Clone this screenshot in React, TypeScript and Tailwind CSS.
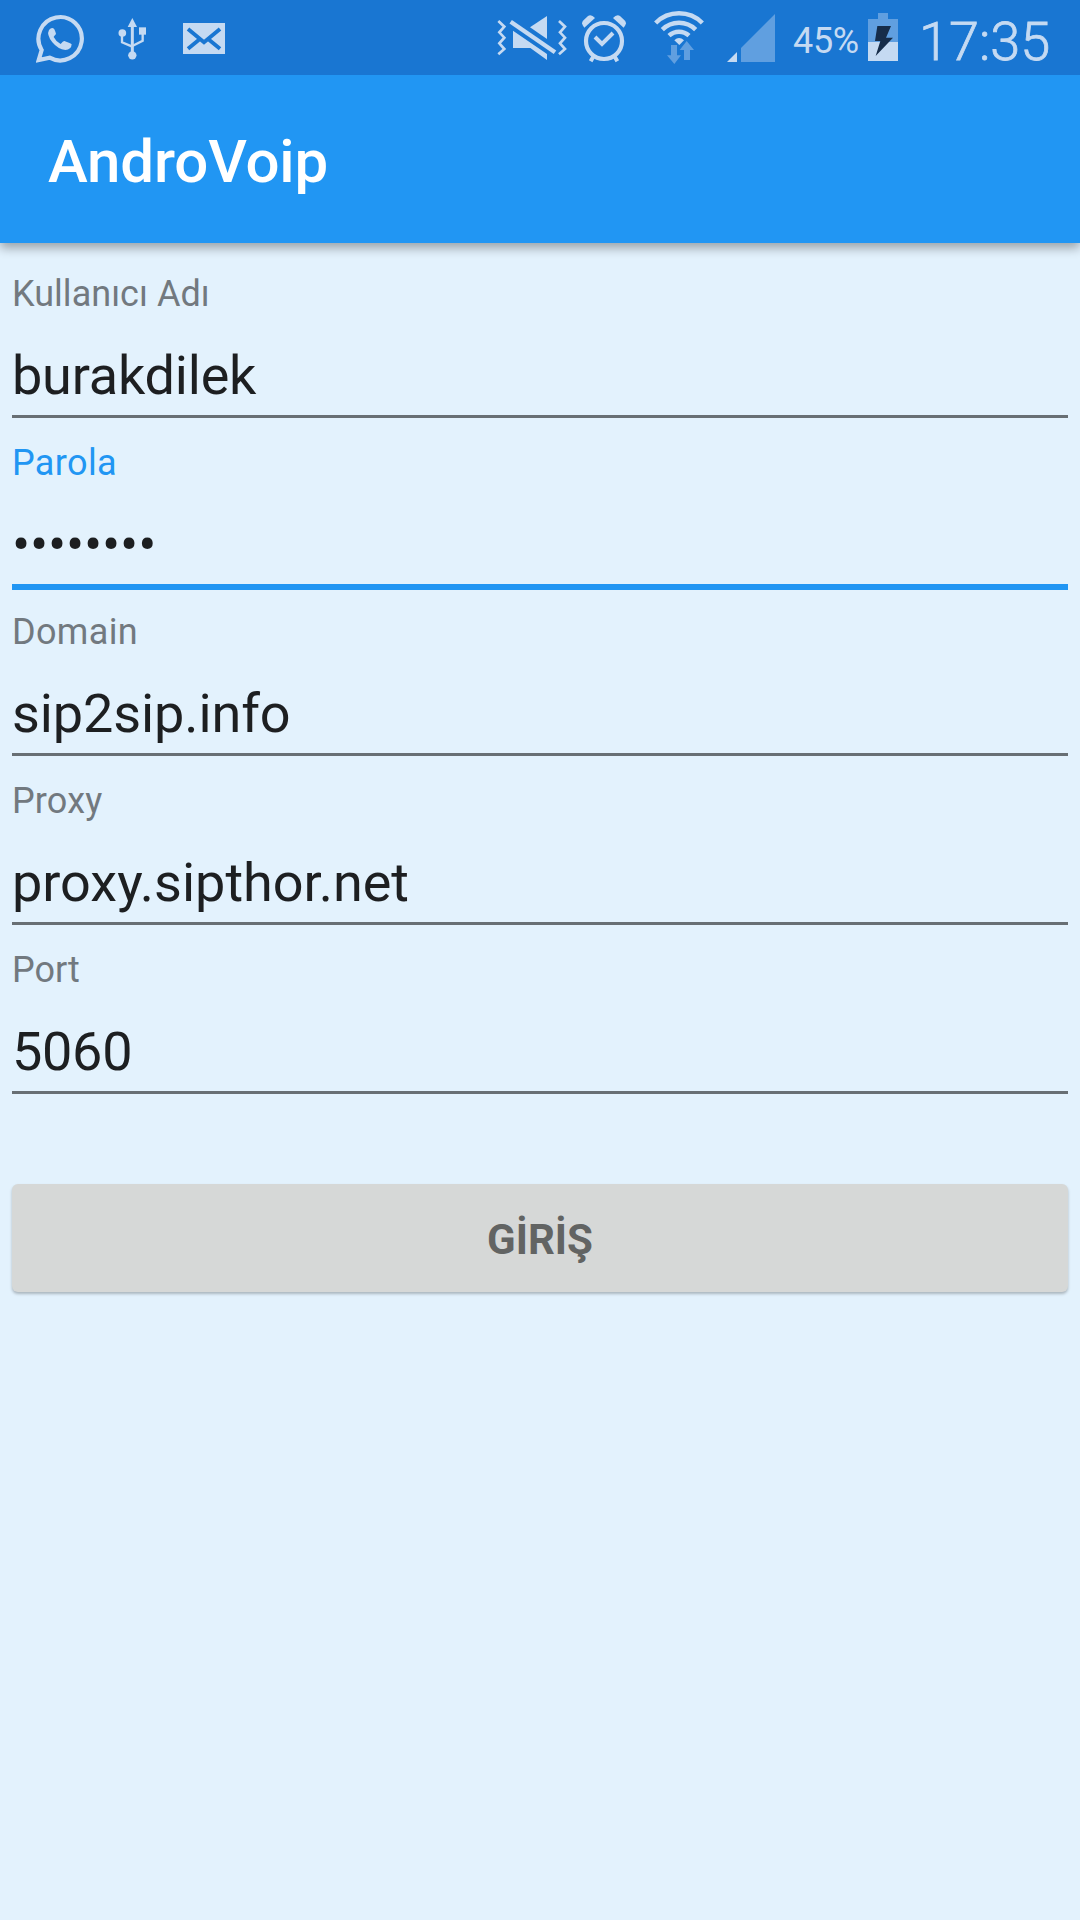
import React from "react";

const fields = [
  { label: "Kullanıcı Adı", value: "burakdilek", focused: false, labelTracking: "tracking-[0.03px]", valueTracking: "tracking-[-0.2px]" },
  { label: "Parola", value: "••••••••", focused: true, labelTracking: "tracking-[0.35px]", valueTracking: "tracking-[-0.2px]" },
  { label: "Domain", value: "sip2sip.info", focused: false, labelTracking: "tracking-[0.35px]", valueTracking: "tracking-[-0.1px]" },
  { label: "Proxy", value: "proxy.sipthor.net", focused: false, labelTracking: "tracking-[0.15px]", valueTracking: "tracking-normal" },
  { label: "Port", value: "5060", focused: false, labelTracking: "tracking-normal", valueTracking: "tracking-[-0.3px]" },
];

function WhatsAppIcon() {
  return (
    <svg className="ml-9 h-[75px] w-12 shrink-0" viewBox="108 0 144 225" fill="none">
      <path d="M116 180 L125 150 A65 65 0 1 1 149 173 Z" stroke="#c5daf2" strokeWidth="12.5" strokeMiterlimit="3" />
      <path
        d="M147 90 Q156 79 163 88 Q168 99 168 102 Q161 109 161 111 Q168 125 182 132 Q190 122 193 123 Q210 129 215 133 Q214 149 196 150 Q174 148 157 127 Q139 104 147 90 Z"
        fill="#c5daf2"
      />
    </svg>
  );
}

function UsbIcon() {
  return (
    <svg className="ml-[34px] h-[75px] w-7 shrink-0" viewBox="354 0 84 225" fill="none">
      <path d="M397 54 L411 81 H383 Z" fill="#c5daf2" />
      <path d="M397 78 V165" stroke="#c5daf2" strokeWidth="9" />
      <path d="M366 100 V127 L397 140 M428 98 V122 L397 138" stroke="#c5daf2" strokeWidth="7" />
      <circle cx="397" cy="166" r="12.5" fill="#c5daf2" />
      <circle cx="367" cy="99" r="11.5" fill="#c5daf2" />
      <path d="M417 82 h21 v22 h-21 Z" fill="#c5daf2" />
    </svg>
  );
}

function MailIcon() {
  return (
    <svg className="ml-[37px] h-[75px] w-[42px] shrink-0" viewBox="549 0 126 225" fill="none">
      <path d="M549 69 h126 v93 h-126 Z" fill="#c5daf2" />
      <path
        d="M564 87 L612 127 L660 87 M564 146 L597 119 M660 146 L627 119"
        stroke="#1976d2"
        strokeWidth="11.5"
      />
    </svg>
  );
}

function VibrateMuteIcon() {
  return (
    <svg className="h-[75px] w-[70px] shrink-0" viewBox="51 0 210 225" fill="none">
      <path d="M55 63 L73 80 L58 97 L73 113 L58 130 L73 147 L55 163" stroke="#c5daf2" strokeWidth="8" />
      <path d="M237 63 L255 80 L240 97 L255 113 L240 130 L255 147 L237 163" stroke="#c5daf2" strokeWidth="8" />
      <path d="M201 48 V117 L150 82 Z" fill="#c5daf2" />
      <path d="M99 92 L201 162 V180 L151 144 H99 Z" fill="#c5daf2" />
      <path d="M92 65 L225 157" stroke="#c5daf2" strokeWidth="13" />
    </svg>
  );
}

function AlarmIcon() {
  return (
    <svg className="ml-[15px] h-[75px] w-11 shrink-0" viewBox="306 0 132 225" fill="none">
      <circle cx="372" cy="123" r="54" stroke="#c5daf2" strokeWidth="12.5" />
      <path d="M345 111 L366 132 L399 99" stroke="#c5daf2" strokeWidth="12" />
      <path d="M313 83 Q302 72 309 62 L324 48 Q334 42 345 54 Z" fill="#c5daf2" />
      <path d="M431 83 Q442 72 435 62 L420 48 Q410 42 399 54 Z" fill="#c5daf2" />
      <path d="M341 168 L332 184 M403 168 L412 184" stroke="#c5daf2" strokeWidth="12" />
    </svg>
  );
}

function WifiIcon() {
  return (
    <svg className="ml-7 h-[75px] w-[50px] shrink-0" viewBox="522 0 150 225" fill="none">
      <path d="M527 69 A99 99 0 0 1 667 69" stroke="#c5daf2" strokeWidth="13.5" />
      <path d="M547 89 A71 71 0 0 1 647 89" stroke="#c5daf2" strokeWidth="13.5" />
      <path d="M567 107 A44 44 0 0 1 627 107" stroke="#c5daf2" strokeWidth="13.5" />
      <path d="M583 121 Q597 107 612 121 L598 135 Z" fill="#c5daf2" />
      <path d="M573 135 h18 v31 h12 L583 192 L561 166 h12 Z" fill="#609fe0" />
      <path d="M612 180 h18 v-30 h12 L620 123 L599 150 h13 Z" fill="#609fe0" />
    </svg>
  );
}

function SignalIcon() {
  return (
    <svg className="ml-[23px] h-[75px] w-12 shrink-0" viewBox="741 0 144 225">
      <path d="M741 186 L771 156 V186 Z" fill="#c5daf2" />
      <path d="M783 186 V144 L885 42 V186 Z" fill="#609fe0" />
    </svg>
  );
}

function BatteryIcon() {
  return (
    <svg className="h-[75px] w-[30px] shrink-0" viewBox="264 0 90 225">
      <path d="M264 57 H294 V39 H324 V57 H354 V126 H264 Z" fill="#609fe0" />
      <path d="M264 126 H354 V183 H264 Z" fill="#c5daf2" />
      <path d="M292 78 H333 L318 113 H339 L287 168 L301 123 H285 Z" fill="#162d4a" />
    </svg>
  );
}

export default function App() {
  return (
    <div className="flex h-[1920px] w-[1080px] flex-col overflow-hidden bg-[#e3f2fd] font-['Roboto',sans-serif]">
      <div className="relative z-10 flex h-[75px] shrink-0 bg-[#1976d2] text-[#c5daf2]">
        <WhatsAppIcon />
        <UsbIcon />
        <MailIcon />
        <div className="ml-auto flex pr-[29px]">
          <VibrateMuteIcon />
          <AlarmIcon />
          <WifiIcon />
          <SignalIcon />
          <span className="ml-[18px] w-[75px] pt-5 text-[36px] leading-[42px] tracking-[-0.3px] whitespace-nowrap">45%</span>
          <BatteryIcon />
          <span className="ml-[21px] w-[132px] pt-[10px] text-[54px] leading-[64px] font-light whitespace-nowrap [-webkit-text-stroke:0.8px_#c5daf2]">17:35</span>
        </div>
      </div>
      <header className="flex h-[168px] shrink-0 items-center bg-[#2196f3] pl-12 shadow-[0_5px_10px_rgba(0,0,0,0.33)]">
        <h1 className="pt-[5px] text-[60px] leading-[70px] font-medium tracking-[-0.15px] text-white">AndroVoip</h1>
      </header>
      <main className="flex flex-col px-3 pt-[30px]">
        {fields.map((f) => (
          <label key={f.label} className="flex h-[169px] flex-col">
            <span className={`text-[36px] leading-[42px] ${f.labelTracking} ${f.focused ? "text-[#2196f3]" : "text-[#72797f]"}`}>
              {f.label}
            </span>
            <span className={`mt-[29px] text-[54px] leading-[64px] text-[#1d1f21] ${f.valueTracking}`}>{f.value}</span>
            <span className={f.focused ? "mt-[7px] h-1.5 bg-[#2196f3]" : "mt-[7px] h-[3px] bg-[#686f74]"} />
          </label>
        ))}
        <button className="mt-[66px] h-[108px] rounded-md bg-[#d6d8d7] pt-1 text-[42px] leading-[50px] font-bold text-[#626463] shadow-[0_2px_3px_rgba(0,0,0,0.25)]">
          GİRİŞ
        </button>
      </main>
    </div>
  );
}
